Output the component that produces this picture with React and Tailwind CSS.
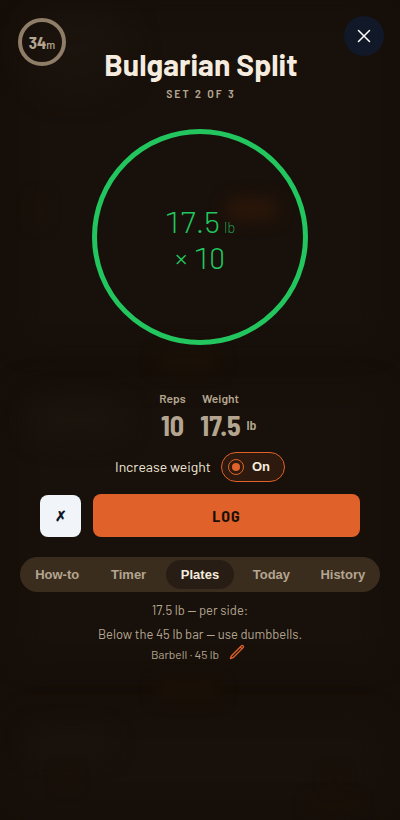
import React, { useState } from "react";

const TABS = ["How-to", "Timer", "Plates", "Today", "History"];

function Backdrop() {
  return (
    <div aria-hidden="true" className="pointer-events-none absolute inset-0 overflow-hidden">
      <div className="absolute inset-x-4 top-2 h-[340px] rounded-3xl bg-[#18100a] blur-md" />
      <div className="absolute inset-x-4 top-[385px] h-[280px] rounded-3xl bg-[#18100a] blur-md" />
      <div className="absolute inset-x-4 top-[715px] h-[90px] rounded-3xl bg-[#18100a] blur-md" />
      <div className="absolute left-[30px] top-3 h-[75px] w-[95px] rounded-full bg-[#1b130d] blur-lg" />
      <div className="absolute left-[225px] top-[198px] h-[22px] w-[54px] rounded-full bg-[#2b1609] blur-sm" />
      <div className="absolute left-[34px] top-[196px] h-[28px] w-[10px] rounded-full bg-[#1d1309] blur-sm" />
      <div className="absolute left-[155px] top-[352px] h-[18px] w-[66px] rounded-full bg-[#1b1107] blur-sm" />
      <div className="absolute left-[30px] top-[402px] h-[36px] w-[95px] rounded-full bg-[#1b130d] blur-md" />
      <div className="absolute left-[155px] top-[681px] h-[18px] w-[66px] rounded-full bg-[#1b1107] blur-sm" />
      <div className="absolute left-[30px] top-[733px] h-[20px] w-[80px] rounded-full bg-[#1b130d] blur-md" />
      <div className="absolute left-[60px] top-[772px] h-[14px] w-[14px] rounded-full bg-[#1b1107] blur-sm" />
      <div className="absolute left-[328px] top-[772px] h-[14px] w-[14px] rounded-full bg-[#1b1107] blur-sm" />
      <div className="absolute left-[308px] top-[800px] h-[10px] w-[50px] rounded-full bg-[#1b1107] blur-sm" />
    </div>
  );
}

export default function App() {
  const [tab, setTab] = useState("Plates");
  const [increase, setIncrease] = useState(true);
  const [reps, setReps] = useState("10");
  const [weight, setWeight] = useState("17.5");

  return (
    <div className="relative min-h-screen bg-[#160e08] font-['Barlow','Roboto',sans-serif] text-[#b3a590]">
      <Backdrop />
      <div className="relative flex flex-col pt-4">
        <header className="grid grid-cols-[48px_1fr_48px] items-start pr-4 pl-[18px]">
          <div className="mt-0.5 flex size-12 items-center justify-center rounded-full border-4 border-[#8f7d68] font-['Barlow_Semi_Condensed','Roboto',sans-serif]">
            <span className="text-[17px] leading-5 font-bold">34</span>
            <span className="pt-1 text-xs leading-4 font-medium">m</span>
          </div>
          <div className="flex flex-col items-center pt-[30px] text-center">
            <h1 className="text-[30px] leading-9 font-bold whitespace-nowrap text-[#f5ecdf]">Bulgarian Split</h1>
            <p className="font-['Barlow_Semi_Condensed','Roboto',sans-serif] text-xs leading-[22px] font-semibold tracking-[2px]">SET 2 OF 3</p>
          </div>
          <button
            type="button"
            aria-label="Close"
            className="flex size-10 items-center justify-center justify-self-end rounded-full bg-[#111827] text-white"
          >
            <svg width="14" height="14" viewBox="0 0 14 14" fill="none" stroke="currentColor" strokeWidth="1.5" strokeLinecap="round">
              <path d="M1.5 1.5l11 11M12.5 1.5l-11 11" />
            </svg>
          </button>
        </header>

        <section className="mt-[25px] flex size-[216px] flex-col items-center justify-center self-center rounded-full border-[5px] border-[#22c55e] pt-1 text-[30px] leading-9 font-light tabular-nums text-[#22c55e]">
          <div className="flex items-baseline gap-1">
            <span>17.5</span>
            <span className="text-[15px] leading-none opacity-70">lb</span>
          </div>
          <div>× 10</div>
        </section>

        <div className="mt-11 flex justify-center gap-3 pl-px">
          <div className="flex flex-col items-center">
            <label htmlFor="reps" className="text-xs leading-[18px] font-semibold">Reps</label>
            <input
              id="reps"
              value={reps}
              onChange={(e) => setReps(e.target.value)}
              className="w-7 bg-transparent text-center font-['Barlow_Semi_Condensed','Roboto',sans-serif] text-[28px] leading-9 font-bold outline-none"
            />
          </div>
          <div className="relative flex flex-col items-center">
            <label htmlFor="weight" className="text-xs leading-[18px] font-semibold">Weight</label>
            <input
              id="weight"
              value={weight}
              onChange={(e) => setWeight(e.target.value)}
              className="w-11 bg-transparent text-center font-['Barlow_Semi_Condensed','Roboto',sans-serif] text-[28px] leading-9 font-bold outline-none"
            />
            <span className="absolute bottom-0 left-full pl-1 font-['Barlow_Semi_Condensed','Roboto',sans-serif] text-sm leading-9 font-semibold">lb</span>
          </div>
        </div>

        <div className="mt-[9px] flex items-center justify-center gap-2.5">
          <span id="increase-label" className="text-sm text-[#f0e6d6]">Increase weight</span>
          <label className="flex h-[30px] w-16 cursor-pointer items-center gap-2 rounded-full border border-[#e0622a] bg-[#2d190e] pl-1.5 font-['Liberation_Sans',sans-serif] text-[13px] font-bold text-[#f5ecdf]">
            <input
              type="checkbox"
              aria-labelledby="increase-label"
              checked={increase}
              onChange={(e) => setIncrease(e.target.checked)}
              className="size-4 appearance-none rounded-full border border-[#e0622a] bg-[#2d190e] p-[3px] checked:bg-[#e0622a] checked:bg-clip-content"
            />
            {increase ? "On" : "Off"}
          </label>
        </div>

        <div className="mt-3 flex items-end gap-3 px-10">
          <button type="button" aria-label="Skip set" className="h-[42px] w-[41px] rounded-lg bg-[#f1f5f9] text-sm font-bold text-[#0f172a]">
            ✗
          </button>
          <button type="button" className="h-[43px] flex-1 rounded-lg bg-[#e0622a] font-['Barlow_Semi_Condensed','Roboto',sans-serif] text-base font-bold tracking-[1px] text-[#1c0f08]">
            LOG
          </button>
        </div>

        <nav role="tablist" className="mx-5 mt-5 grid grid-cols-5 gap-[3px] rounded-full bg-[#3b2d1e] p-[3px] font-['Liberation_Sans',sans-serif] text-[13px] font-bold">
          {TABS.map((name) => (
            <button
              key={name}
              type="button"
              role="tab"
              aria-selected={tab === name}
              onClick={() => setTab(name)}
              className="h-[29px] rounded-full aria-selected:bg-[#281d14] aria-selected:text-[#f5ecdf]"
            >
              {name}
            </button>
          ))}
        </nav>

        <section className="mt-1.5 flex flex-col items-center text-center text-[13px] leading-6">
          <p>17.5 lb — per side:</p>
          <p>Below the 45 lb bar — use dumbbells.</p>
          <div className="flex h-4 items-center gap-2.5 pr-1 text-xs leading-4">
            <span>Barbell · 45 lb</span>
            <button type="button" aria-label="Edit bar weight" className="-mt-1 text-[#e0622a]">
              <svg width="16" height="16" viewBox="0 0 24 24" fill="none" stroke="currentColor" strokeWidth="2" strokeLinecap="round" strokeLinejoin="round">
                <path d="m16.862 4.487 1.687-1.688a1.875 1.875 0 1 1 2.652 2.652L6.832 19.82a4.5 4.5 0 0 1-1.897 1.13l-2.685.8.8-2.685a4.5 4.5 0 0 1 1.13-1.897L16.863 4.487Zm0 0L19.5 7.125" />
              </svg>
            </button>
          </div>
        </section>
      </div>
    </div>
  );
}
